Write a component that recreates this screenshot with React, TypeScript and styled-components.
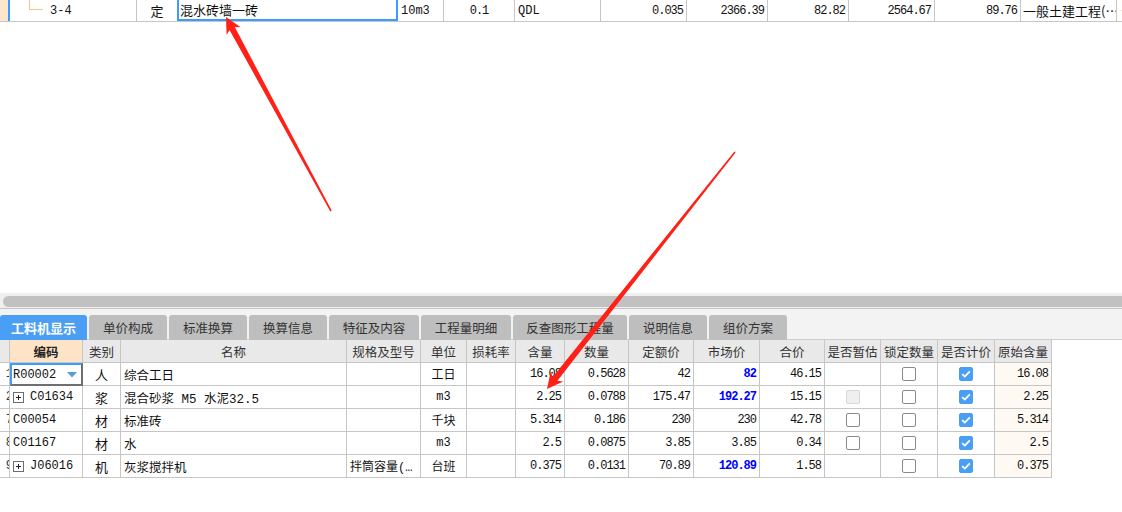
import React from 'react';
import styled, { createGlobalStyle } from 'styled-components';

const MONO = `"Liberation Mono", "Noto Sans CJK SC", monospace`;
const CJK = `"Noto Sans CJK SC", "Liberation Sans", sans-serif`;
const LINE = '#c6c6c6';

const GlobalStyle = createGlobalStyle`
  html, body { margin: 0; padding: 0; background: #fff; }
  body { font-family: ${CJK}; font-size: 12px; color: #000; }
  #root { width: 1122px; height: 512px; overflow: hidden; position: relative; }
`;

const Page = styled.div`
  display: flex;
  flex-direction: column;
  width: 1122px;
  height: 512px;
`;

/* ---------- top (upper grid, single visible row) ---------- */
const TopRow = styled.div`
  display: flex;
  height: 21px;
  border-bottom: 1px solid ${LINE};
  white-space: nowrap;
  flex: 0 0 auto;
`;

const Marker = styled.div`
  flex: 0 0 8px;
  background: #fde6ca;
  border-right: 2px solid #3d9bff;
`;

const TCell = styled.div<{ $w?: number; $align?: 'left' | 'center' | 'right'; $num?: boolean; $noLine?: boolean }>`
  flex: ${p => (p.$w ? `0 0 ${p.$w}px` : '1 1 auto')};
  box-sizing: border-box;
  border-right: ${p => (p.$noLine ? 'none' : `1px solid ${LINE}`)};
  padding: 0 3px;
  display: flex;
  align-items: center;
  justify-content: ${p => (p.$align === 'center' ? 'center' : p.$align === 'right' ? 'flex-end' : 'flex-start')};
  overflow: hidden;
  font-family: ${MONO};
  font-size: 12px;
  letter-spacing: ${p => (p.$num ? '-1px' : '0')};
  color: #111;
`;

const TreeCell = styled(TCell)`
  align-items: stretch;
  padding: 0;
`;

const Branch = styled.span`
  flex: 0 0 13px;
  height: 9px;
  margin-left: 19px;
  border-left: 1px solid #f5c58a;
  border-bottom: 1px solid #f5c58a;
`;

const TreeLabel = styled.span`
  margin-left: 7px;
  align-self: center;
`;

const FocusName = styled(TCell)`
  border: 2px solid #3d9bff;
  border-top: none;
  padding: 0 1px;
  font-family: ${CJK};
  font-size: 13px;
`;

const Blank = styled.div`
  flex: 0 0 271px;
`;

/* ---------- scroll bar + tabs ---------- */
const ScrollBar = styled.div`
  flex: 0 0 16px;
  box-sizing: border-box;
  background: #efefef;
  padding: 3px 0 2px 3px;
  border-bottom: 1px solid #c4c4c4;
  overflow: hidden;
`;

const Thumb = styled.div`
  height: 11px;
  margin-right: -12px;
  border-radius: 6px;
  background: #c1c1c1;
`;

const TabStrip = styled.div`
  flex: 0 0 31px;
  box-sizing: border-box;
  background: #f3f3f3;
  display: flex;
  align-items: flex-end;
  gap: 2px;
  box-shadow: inset 0 -1px 0 #cfcfcf;
`;

const Tab = styled.div<{ $w: number; $active?: boolean }>`
  flex: 0 0 ${p => p.$w}px;
  height: 25px;
  border-radius: 3px 3px 0 0;
  background: ${p => (p.$active ? '#4a9ff5' : '#bebebe')};
  color: ${p => (p.$active ? '#fff' : '#333')};
  font-weight: ${p => (p.$active ? 700 : 400)};
  font-size: ${p => (p.$active ? 13 : 12.5)}px;
  display: flex;
  align-items: center;
  justify-content: center;
  white-space: nowrap;
`;

/* ---------- lower grid ---------- */
const COLS = [10, 73, 38, 226, 74, 46, 49, 49, 64, 65, 66, 65, 56, 57, 57, 57];

const Grid = styled.div`
  display: grid;
  grid-template-columns: ${COLS.map(c => `${c}px`).join(' ')};
  grid-auto-rows: 23px;
  width: 1052px;
`;

const HeadCell = styled.div<{ $hl?: boolean }>`
  box-sizing: border-box;
  border-right: 1px solid ${LINE};
  border-bottom: 1px solid ${LINE};
  background: ${p => (p.$hl ? '#fde4c6' : '#e9e9e9')};
  font-weight: ${p => (p.$hl ? 700 : 400)};
  color: ${p => (p.$hl ? '#222' : '#333')};
  font-size: 12.5px;
  display: flex;
  align-items: center;
  justify-content: center;
  white-space: nowrap;
  overflow: hidden;
`;

const Cell = styled.div<{ $align?: 'left' | 'center' | 'right'; $num?: boolean; $tint?: boolean; $blue?: boolean }>`
  box-sizing: border-box;
  border-right: 1px solid ${LINE};
  border-bottom: 1px solid ${LINE};
  background: ${p => (p.$tint ? '#fefaf3' : '#fff')};
  padding: 0 3px;
  display: flex;
  align-items: center;
  justify-content: ${p => (p.$align === 'center' ? 'center' : p.$align === 'right' ? 'flex-end' : 'flex-start')};
  white-space: nowrap;
  overflow: hidden;
  font-family: ${MONO};
  font-size: 12px;
  letter-spacing: ${p => (p.$num ? '-1px' : '0')};
  color: ${p => (p.$blue ? '#0000ff' : '#111')};
  font-weight: ${p => (p.$blue ? 700 : 400)};
`;

const NumCell = styled(Cell)`
  padding: 0;
  justify-content: flex-end;
  color: #333;
`;

const ClippedDigit = styled.span`
  margin-right: -4px;
`;

const CodeFocus = styled(Cell)`
  border: 2px solid #6f6f6f;
  border-left-color: #3d9bff;
  border-top-color: #3d9bff;
  justify-content: space-between;
  padding: 0 4px 0 1px;
`;

const CodeCell = styled(Cell)`
  gap: 6px;
`;

const Expander = styled.span`
  display: inline-flex;
  width: 11px;
  height: 11px;
`;

const Box = styled.span<{ $state: 'on' | 'off' | 'disabled' }>`
  display: inline-flex;
  align-items: center;
  justify-content: center;
  box-sizing: border-box;
  width: 14px;
  height: 14px;
  border-radius: 2px;
  border: 1px solid ${p => (p.$state === 'on' ? '#4a9ff5' : p.$state === 'disabled' ? '#d6d6d6' : '#8a8a8a')};
  background: ${p => (p.$state === 'on' ? '#4a9ff5' : p.$state === 'disabled' ? '#efefef' : '#fff')};
`;

const Overlay = styled.svg`
  position: absolute;
  left: 0;
  top: 0;
  pointer-events: none;
`;

type Check = 'on' | 'off' | 'disabled' | null;
type Row = {
  no: string;
  code: string;
  kind: 'focus' | 'expand' | 'plain';
  cat: string;
  name: string;
  spec: string;
  unit: string;
  qty: string;
  amount: string;
  quota: string;
  market: string;
  marketBlue: boolean;
  total: string;
  est: Check;
  lock: Check;
  priced: Check;
  orig: string;
};

const rows: Row[] = [
  { no: '1', code: 'R00002', kind: 'focus', cat: '人', name: '综合工日', spec: '', unit: '工日', qty: '16.08', amount: '0.5628', quota: '42', market: '82', marketBlue: true, total: '46.15', est: null, lock: 'off', priced: 'on', orig: '16.08' },
  { no: '2', code: 'C01634', kind: 'expand', cat: '浆', name: '混合砂浆 M5 水泥32.5', spec: '', unit: 'm3', qty: '2.25', amount: '0.0788', quota: '175.47', market: '192.27', marketBlue: true, total: '15.15', est: 'disabled', lock: 'off', priced: 'on', orig: '2.25' },
  { no: '7', code: 'C00054', kind: 'plain', cat: '材', name: '标准砖', spec: '', unit: '千块', qty: '5.314', amount: '0.186', quota: '230', market: '230', marketBlue: false, total: '42.78', est: 'off', lock: 'off', priced: 'on', orig: '5.314' },
  { no: '8', code: 'C01167', kind: 'plain', cat: '材', name: '水', spec: '', unit: 'm3', qty: '2.5', amount: '0.0875', quota: '3.85', market: '3.85', marketBlue: false, total: '0.34', est: 'off', lock: 'off', priced: 'on', orig: '2.5' },
  { no: '9', code: 'J06016', kind: 'expand', cat: '机', name: '灰浆搅拌机', spec: '拌筒容量(…', unit: '台班', qty: '0.375', amount: '0.0131', quota: '70.89', market: '120.89', marketBlue: true, total: '1.58', est: null, lock: 'off', priced: 'on', orig: '0.375' },
];

const headers = ['', '编码', '类别', '名称', '规格及型号', '单位', '损耗率', '含量', '数量', '定额价', '市场价', '合价', '是否暂估', '锁定数量', '是否计价', '原始含量'];

const tabs: [string, number][] = [
  ['工料机显示', 87], ['单价构成', 78], ['标准换算', 78], ['换算信息', 78], ['特征及内容', 90],
  ['工程量明细', 90], ['反查图形工程量', 114], ['说明信息', 78], ['组价方案', 78],
];

const CheckBox = ({ state }: { state: Check }) =>
  state ? (
    <Box $state={state}>
      {state === 'on' && (
        <svg width="10" height="8" viewBox="0 0 10 8">
          <path d="M1.2 4.2 L3.8 6.6 L8.8 1.4" fill="none" stroke="#fff" strokeWidth="1.8" />
        </svg>
      )}
    </Box>
  ) : null;

const PlusBox = () => (
  <Expander>
    <svg width="11" height="11" viewBox="0 0 11 11">
      <rect x="0.5" y="0.5" width="10" height="10" fill="#fff" stroke="#6d6d6d" />
      <path d="M3 5.5 H8 M5.5 3 V8" stroke="#222" strokeWidth="1" />
    </svg>
  </Expander>
);

function arrow(tx: number, ty: number, px: number, py: number) {
  const dx = px - tx;
  const dy = py - ty;
  const L = Math.hypot(dx, dy);
  const ux = dx / L;
  const uy = dy / L;
  const nx = -uy;
  const ny = ux;
  const head = 16;
  const hw = 8;
  const s0 = 0.8;
  const s1 = 3;
  const bx = px - ux * head;
  const by = py - uy * head;
  const pts = [
    [tx + nx * s0, ty + ny * s0],
    [bx + ux * 3 + nx * s1, by + uy * 3 + ny * s1],
    [bx + nx * hw, by + ny * hw],
    [px, py],
    [bx - nx * hw, by - ny * hw],
    [bx + ux * 3 - nx * s1, by + uy * 3 - ny * s1],
    [tx - nx * s0, ty - ny * s0],
  ];
  return pts.map(p => `${p[0].toFixed(1)},${p[1].toFixed(1)}`).join(' ');
}

export default function App() {
  return (
    <>
      <GlobalStyle />
      <Page>
        <TopRow>
          <Marker />
          <TreeCell $w={127}>
            <Branch />
            <TreeLabel>3-4</TreeLabel>
          </TreeCell>
          <TCell $w={40} $align="center" $noLine style={{ fontFamily: CJK, fontSize: 13 }}>定</TCell>
          <FocusName $w={221}>混水砖墙一砖</FocusName>
          <TCell $w={46}>10m3</TCell>
          <TCell $w={71} $align="center" $num>0.1</TCell>
          <TCell $w={86}>QDL</TCell>
          <TCell $w={86} $align="right" $num>0.035</TCell>
          <TCell $w={81} $align="right" $num>2366.39</TCell>
          <TCell $w={81} $align="right" $num>82.82</TCell>
          <TCell $w={86} $align="right" $num>2564.67</TCell>
          <TCell $w={86} $align="right" $num>89.76</TCell>
          <TCell $w={96} style={{ fontFamily: CJK, fontSize: 13, paddingLeft: 2 }}>一般土建工程(…</TCell>
          <TCell $noLine>-</TCell>
        </TopRow>

        <Blank />

        <ScrollBar>
          <Thumb />
        </ScrollBar>

        <TabStrip>
          {tabs.map(([label, w], i) => (
            <Tab key={label} $w={w} $active={i === 0}>{label}</Tab>
          ))}
        </TabStrip>

        <Grid>
          {headers.map((h, i) => (
            <HeadCell key={i} $hl={i === 1}>{h}</HeadCell>
          ))}
          {rows.map(r => (
            <React.Fragment key={r.no}>
              <NumCell><ClippedDigit>{r.no}</ClippedDigit></NumCell>
              {r.kind === 'focus' ? (
                <CodeFocus>
                  <span>{r.code}</span>
                  <svg width="10" height="6" viewBox="0 0 10 6">
                    <path d="M0 0 H10 L5 5.5 Z" fill="#5b9bd5" />
                  </svg>
                </CodeFocus>
              ) : (
                <CodeCell>
                  {r.kind === 'expand' && <PlusBox />}
                  <span>{r.code}</span>
                </CodeCell>
              )}
              <Cell $align="center" style={{ fontSize: 13 }}>{r.cat}</Cell>
              <Cell style={{ fontSize: 12.5 }}>{r.name}</Cell>
              <Cell>{r.spec}</Cell>
              <Cell $align="center">{r.unit}</Cell>
              <Cell />
              <Cell $align="right" $num>{r.qty}</Cell>
              <Cell $align="right" $num>{r.amount}</Cell>
              <Cell $align="right" $num>{r.quota}</Cell>
              <Cell $align="right" $num $blue={r.marketBlue}>{r.market}</Cell>
              <Cell $align="right" $num>{r.total}</Cell>
              <Cell $align="center"><CheckBox state={r.est} /></Cell>
              <Cell $align="center"><CheckBox state={r.lock} /></Cell>
              <Cell $align="center"><CheckBox state={r.priced} /></Cell>
              <Cell $align="right" $num $tint>{r.orig}</Cell>
            </React.Fragment>
          ))}
        </Grid>
      </Page>

      <Overlay width="1122" height="512" viewBox="0 0 1122 512">
        <polygon points={arrow(331, 211, 226, 17)} fill="#ff2117" />
        <polygon points={arrow(735, 152, 547, 389)} fill="#ff2117" />
      </Overlay>
    </>
  );
}
